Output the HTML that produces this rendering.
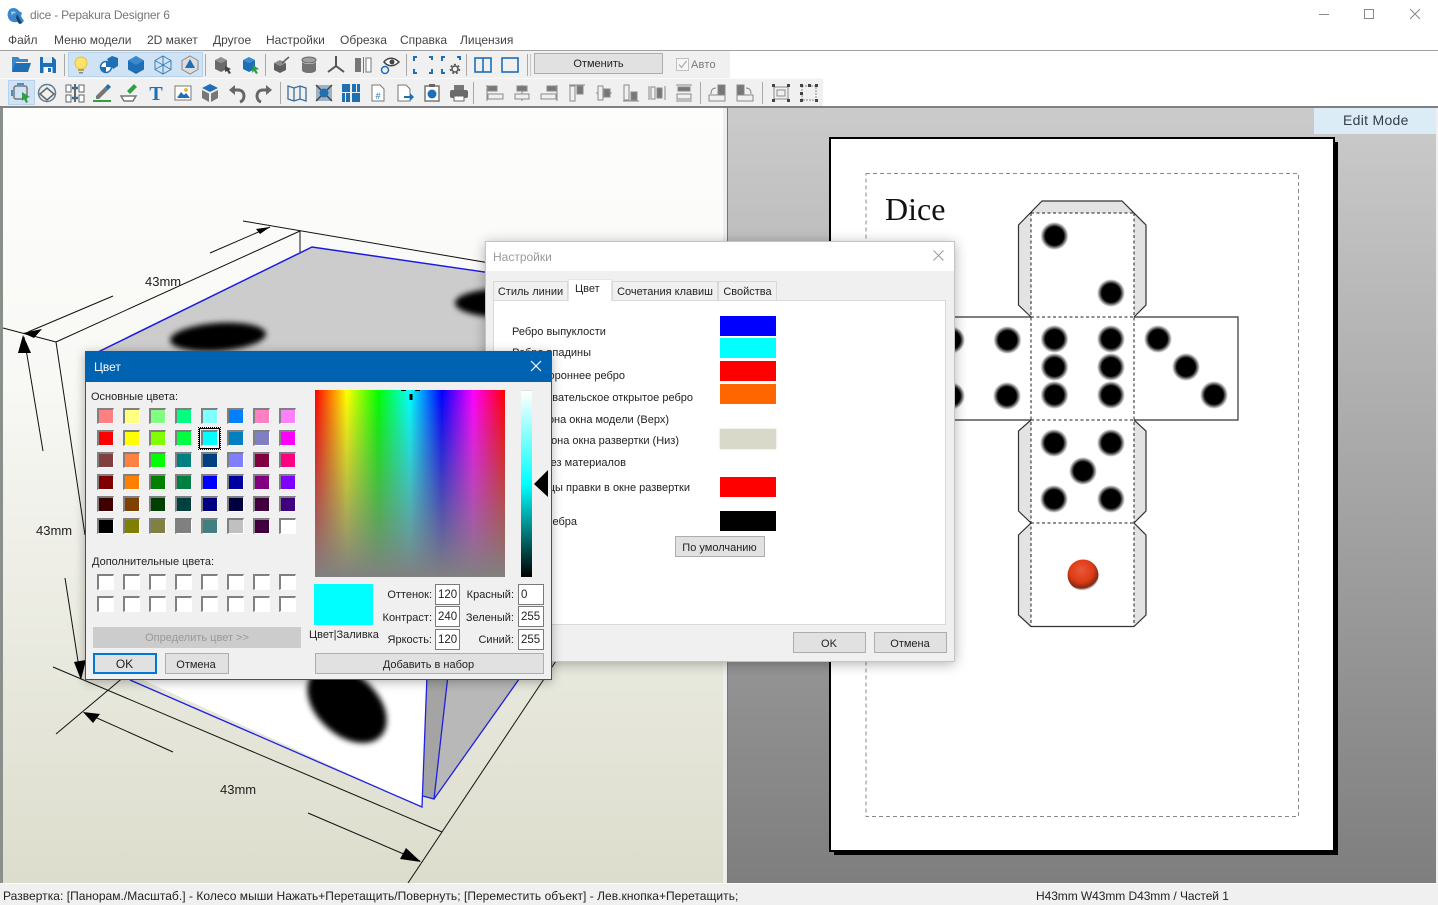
<!DOCTYPE html>
<html lang="ru"><head><meta charset="utf-8"><title>dice - Pepakura Designer 6</title>
<style>
html,body{margin:0;padding:0;background:#fff}
body{position:relative;width:1438px;height:905px;overflow:hidden;font-family:"Liberation Sans","Noto Sans CJK SC",sans-serif;font-size:11px;color:#222}
.a{position:absolute;white-space:nowrap}
.t{position:absolute;white-space:nowrap;line-height:14px}
.btn{position:absolute;box-sizing:border-box;background:#e1e1e1;border:1px solid #adadad;text-align:center;color:#222;white-space:nowrap}
.menu{position:absolute;top:33px;font-size:12px;line-height:14px;color:#444;white-space:nowrap}
.lab{position:absolute;white-space:nowrap;line-height:14px;color:#222}
.sw{position:absolute;left:720px;width:56px;height:20px}
.grid{position:absolute;display:grid;grid-template-columns:repeat(8,17px);column-gap:9px;row-gap:6px;grid-auto-rows:16px}
.grid i{display:block;box-sizing:border-box;border-style:solid;border-width:2px 1px 1px 2px;border-color:#808080 #fff #fff #808080}
.inp{position:absolute;box-sizing:border-box;background:#fff;border:1px solid #7a7a7a;height:21px;line-height:20px;padding-left:2px;font-size:11.5px;color:#222}
.rl{position:absolute;line-height:14px;white-space:nowrap;color:#222}
.tab{position:absolute;box-sizing:border-box;top:281px;height:19px;background:#f0f0f0;border:1px solid #d9d9d9;border-bottom:none;line-height:20px;text-align:center;color:#222;white-space:nowrap}
</style></head>
<body>

<!-- window chrome -->
<div class="a" style="left:0;top:0;width:1438px;height:51px;background:#fff;border-bottom:1px solid #a0a0a0;box-sizing:border-box"></div>
<svg class="a" style="left:7px;top:6px" width="20" height="20" viewBox="0 0 20 20"><path d="M3 3C6 1 10 2 12 5l3 2-1 3 3 5-3 3-4-2c-4 1-8-1-9-5C0 8 1 5 3 3z" fill="#3a88c9"/><path d="M10 8l5 9-3 1-3-6z" fill="#1c3f6b"/><path d="M4 6c2-1 4-1 5 1-2 0-4 1-4 3z" fill="#9dd0f2"/></svg>
<div class="t" style="left:30px;top:8px;font-size:12px;color:#777;letter-spacing:-.22px">dice - Pepakura Designer 6</div>
<svg class="a" style="left:1310px;top:0" width="128" height="30"><g stroke="#888" fill="none" stroke-width="1"><path d="M9 14.5h10"/><rect x="54.500" y="9.500" width="9" height="9"/><path d="M100 9l10 10M110 9l-10 10"/></g></svg>
<div class="menu" style="left:8px">Файл</div>
<div class="menu" style="left:54px">Меню модели</div>
<div class="menu" style="left:147px">2D макет</div>
<div class="menu" style="left:213px">Другое</div>
<div class="menu" style="left:266px">Настройки</div>
<div class="menu" style="left:340px">Обрезка</div>
<div class="menu" style="left:400px">Справка</div>
<div class="menu" style="left:460px">Лицензия</div>

<!-- toolbars -->
<div class="a" style="left:0;top:51px;width:730px;height:27px;background:#f0f0f0"></div>
<div class="a" style="left:0;top:78px;width:823px;height:29px;background:#f0f0f0;border-top:1px solid #fafafa;box-sizing:border-box"></div>
<div class="a" style="left:68px;top:52px;width:135px;height:25px;background:#cfe3f5;border:1px solid #b5d3ee;box-sizing:border-box"></div>
<div class="a" style="left:8px;top:80px;width:27px;height:25px;background:#cfe3f5;border:1px solid #b5d3ee;box-sizing:border-box"></div>
<div class="btn" style="left:534px;top:53px;width:129px;height:21px;line-height:21px">Отменить</div>
<div class="a" style="left:676px;top:58px;width:13px;height:13px;border:1px solid #c0c0c0;box-sizing:border-box;background:#f6f6f6"></div>
<svg class="a" style="left:676px;top:58px" width="13" height="13"><path d="M3 6.500l2.500 3L10.500 3" fill="none" stroke="#aaa" stroke-width="1.200"/></svg>
<div class="t" style="left:691px;top:58px;color:#777;letter-spacing:.2px">Авто</div>

<svg class="a" style="left:0;top:0" width="830" height="108">
<g stroke="#a8a8a8"><path d="M64.500 54v22M205.500 54v22M265.500 54v22M406.500 54v22M466.500 54v22M527.500 54v22M280.500 82v22M473.500 82v22M700.500 82v22M762.500 82v22" fill="none"/></g>
<g stroke="#c8c8c8"><path d="M530.500 54v22" fill="none"/></g>
<!-- row 1 -->
<g transform="translate(21,65)"><path d="M-9-8h6l2 2h8v3h-12l-4 10z" fill="#3b87c8"/><path d="M-6-2h16l-3 9H-9z" fill="#1f6fb5"/></g>
<g transform="translate(48,65)"><path d="M-8-8h13l3 3V8H-8z" fill="#1f6fb5"/><rect x="-5" y="-8" width="9" height="6" fill="#dcebf7"/><rect x="-4.500" y="2" width="9" height="6" fill="#fff"/><rect x="0" y="3" width="3" height="4" fill="#1f6fb5"/></g>
<g transform="translate(81,65)"><circle cy="-2" r="6" fill="#fde36b" stroke="#e6c33a"/><rect x="-3" y="4" width="6" height="2" fill="#b0a078"/><rect x="-2" y="7" width="4" height="1.500" fill="#888"/></g>
<g transform="translate(109,65)"><path d="M-2-6l5-3 6 2v8l-5 3z" fill="#1f6fb5"/><circle cx="-3" cy="2" r="5.500" fill="#fff" stroke="#1f6fb5" stroke-width="1.500"/><path d="M-3-3a5 5 0 0 1 5 5h-5zM-3 2v5a5 5 0 0 1-5-5z" fill="#1f6fb5"/></g>
<g transform="translate(136,65)"><path d="M0-9l8 4.500v9L0 9l-8-4.500v-9z" fill="#1f6fb5"/><path d="M0-9l8 4.500L0 0l-8-4.500z" fill="#3a8ad0"/></g>
<g transform="translate(163,65)" fill="none" stroke="#3b7fb8" stroke-width="1"><path d="M0-9l8 4.500v9L0 9l-8-4.500v-9zM0-9V9M-8-4.500L8 4.500M8-4.500L-8 4.500"/></g>
<g transform="translate(190,65)"><path d="M0-9l8 4.500v9L0 9l-8-4.500v-9z" fill="#ddd" stroke="#8a8a8a"/><path d="M0-6l5 9H-5z" fill="#1f6fb5"/></g>
<g transform="translate(222,65)"><path d="M-7-5l6-3 6 3-6 3z" fill="#909090"/><path d="M-7-5l6 3V7l-6-3zM5-5l-6 3V7l6-3z" fill="#6a6a6a"/><path d="M3 1l6 3-2 1 2 3-2 1-2-3-2 1z" fill="#444"/></g>
<g transform="translate(250,65)"><path d="M-7-5l6-3 6 3-6 3z" fill="#3a8ad0"/><path d="M-7-5l6 3V7l-6-3zM5-5l-6 3V7l6-3z" fill="#1f6fb5"/><path d="M3 0l6 4-3 1 2 3-2 1-2-3-2 2z" fill="#2ea043"/></g>
<g transform="translate(281,65)"><path d="M-7-2l6-3 6 3-6 3z" fill="#8a8a8a"/><path d="M-7-2l6 3v7l-6-3zM5-2l-6 3v7l6-3z" fill="#5e5e5e"/><path d="M1-2l7-6" stroke="#5e5e5e" stroke-width="1.500"/></g>
<g transform="translate(309,65)"><ellipse cy="-5" rx="7" ry="3" fill="#a0a0a0" stroke="#666"/><path d="M-7-4v9c0 4 14 4 14 0V-4c0 4-14 4-14 0z" fill="#737373"/></g>
<g transform="translate(336,65)" stroke="#555" stroke-width="2" fill="none"><path d="M0-9V1L-8 7M0 1L8 7"/></g>
<g transform="translate(363,65)"><rect x="-8" y="-7" width="6" height="14" fill="#777"/><rect x="3" y="-7" width="5" height="14" fill="#fff" stroke="#777"/><path d="M0.500-8V8" stroke="#777"/></g>
<g transform="translate(390,65)"><path d="M-6-3c4-5 10-5 15 0-5 5-11 5-15 0z" fill="#fff" stroke="#444" stroke-width="1.500"/><circle cx="2" cy="-3" r="2.500" fill="#444"/><circle cx="-5" cy="5" r="3.500" fill="none" stroke="#1f6fb5" stroke-width="1.500"/></g>
<g transform="translate(423,65)" fill="none" stroke="#1f6fb5" stroke-width="2"><path d="M-9-4v-4h3M6-8h3v3M-9 4v4h3M6 8h3V4"/></g>
<g transform="translate(451,65)"><path d="M-9-4v-4h3M6-8h3v3M-9 4v4h3" fill="none" stroke="#1f6fb5" stroke-width="2"/><circle cx="4" cy="4" r="3" fill="none" stroke="#555" stroke-width="1.500"/><circle cx="4" cy="4" r="4.500" fill="none" stroke="#555" stroke-width="1.500" stroke-dasharray="2 2"/></g>
<g fill="none" stroke="#1f6fb5" stroke-width="1.600"><rect x="475" y="58" width="16" height="14"/><path d="M483 58v14"/><rect x="502" y="58" width="16" height="14"/></g>
<!-- row 2 -->
<g transform="translate(21,93)"><rect x="-7" y="-7" width="13" height="13" rx="2" fill="none" stroke="#777" stroke-width="1.500"/><path d="M-4-9h7M-9-3v6" stroke="#1f6fb5" stroke-width="1.500"/><path d="M1-1l8 5-4 1 2 4-2 1-2-4-2 2z" fill="#2ea043"/></g>
<g transform="translate(47,93)" fill="none"><circle r="8.500" stroke="#5a7f9c" stroke-width="1.500"/><path d="M-7 1l7-6 7 6-7 6z" stroke="#666" stroke-width="1.500" fill="#f0f0f0"/></g>
<g transform="translate(75,93)"><rect x="-9" y="-8" width="5" height="7" fill="#fff" stroke="#666"/><rect x="4" y="-8" width="5" height="7" fill="#fff" stroke="#666"/><rect x="-9" y="2" width="5" height="7" fill="#fff" stroke="#666"/><rect x="4" y="2" width="5" height="7" fill="#fff" stroke="#666"/><path d="M-3-5h6M-3 5h6" stroke="#1f6fb5" stroke-width="2.500"/><rect x="-1" y="-9" width="2" height="18" fill="#666"/></g>
<g transform="translate(102,93)"><path d="M-6 3l9-9 3 3-9 9h-3z" fill="#777"/><path d="M3-6l3-3 3 3-3 3z" fill="#1f6fb5"/><rect x="-9" y="7" width="18" height="2" fill="#2ea043"/></g>
<g transform="translate(129,93)"><path d="M-2-2l7-7 3 3-7 7z" fill="#2ea043"/><path d="M-8 3h15l-3 5H-5z" fill="#fff" stroke="#777" stroke-width="1.500"/></g>
<text x="156" y="100" font-family="Liberation Serif,serif" font-size="20" font-weight="700" fill="#1f6fb5" text-anchor="middle">T</text>
<g transform="translate(183,93)"><rect x="-8" y="-7" width="16" height="14" fill="#fff" stroke="#777"/><circle cx="3" cy="-3" r="2" fill="#e8b93a"/><path d="M-6 5l4-6 3 3 2-2 4 5z" fill="#1f6fb5"/></g>
<g transform="translate(210,93)"><path d="M0-9l8 4-8 4-8-4z" fill="#1f6fb5"/><path d="M-8-3l7 3.500V9l-7-4zM8-3L1 .5V9l7-4z" fill="#777"/></g>
<g transform="translate(237,93)" fill="none" stroke="#666" stroke-width="3"><path d="M-6-3h7c5 0 6 4 6 6s-1 5-4 6"/><path d="M-8-3l6-5v10z" fill="#666" stroke="none"/></g>
<g transform="translate(264,93)" fill="none" stroke="#666" stroke-width="3"><path d="M6-3h-7c-5 0-6 4-6 6s1 5 4 6"/><path d="M8-3L2-8V2z" fill="#666" stroke="none"/></g>
<g transform="translate(297,93)" fill="none" stroke="#3b6d96" stroke-width="1.300"><path d="M-9-7l6 2 6-2 6 2V8L3 6-3 8-9 6zM-3-5V8M3-7V6"/></g>
<g transform="translate(324,93)"><rect x="-8" y="-8" width="16" height="16" fill="#9db2c3"/><path d="M-8-8l5 5M8-8L3-3M-8 8l5-5M8 8L3 3" stroke="#444" stroke-width="1.500"/><circle r="4.500" fill="#1f6fb5"/></g>
<g transform="translate(351,93)" fill="#1f6fb5"><rect x="-9" y="-9" width="8" height="8"/><rect x="1" y="-9" width="4" height="8"/><rect x="6" y="-9" width="3" height="8"/><rect x="-9" y="0" width="3" height="9"/><rect x="-5" y="0" width="4" height="9"/><rect x="1" y="0" width="8" height="9"/></g>
<g transform="translate(378,93)"><path d="M-6-8h8l4 4V8H-6z" fill="#fff" stroke="#777"/><text y="6" font-size="9" text-anchor="middle" fill="#1f6fb5" font-family="Liberation Sans,sans-serif">#</text></g>
<g transform="translate(405,93)"><path d="M-7-8h8l4 4V8H-7z" fill="#fff" stroke="#777"/><path d="M-1 3h6V0l4 4-4 4V5h-6z" fill="#1f6fb5"/></g>
<g transform="translate(432,93)"><rect x="-7" y="-7" width="14" height="15" fill="#fff" stroke="#777" stroke-width="1.500"/><rect x="-3" y="-9" width="6" height="3" fill="#666"/><circle cy="1" r="4.500" fill="#1f6fb5"/></g>
<g transform="translate(459,93)"><rect x="-5" y="-8" width="10" height="5" fill="#777"/><rect x="-9" y="-3" width="18" height="8" rx="2" fill="#6a6a6a"/><rect x="-5" y="3" width="10" height="5" fill="#fff" stroke="#666"/></g>
<!-- align icons -->
<g fill="none" stroke="#8a8a8a">
<g transform="translate(495,93)"><path d="M-8-8V8"/><rect x="-7" y="-7" width="9" height="5" fill="#777"/><rect x="-7" y="1" width="15" height="5" fill="#f0f0f0"/></g>
<g transform="translate(522,93)"><path d="M0-8V8"/><rect x="-5" y="-7" width="10" height="5" fill="#777"/><rect x="-7" y="1" width="14" height="5" fill="#f0f0f0"/></g>
<g transform="translate(549,93)"><path d="M8-8V8"/><rect x="-2" y="-7" width="9" height="5" fill="#777"/><rect x="-8" y="1" width="15" height="5" fill="#f0f0f0"/></g>
<g transform="translate(577,93)"><path d="M-8-8H8"/><rect x="-7" y="-7" width="5" height="15" fill="#f0f0f0"/><rect x="0" y="-7" width="6" height="8" fill="#777"/></g>
<g transform="translate(604,93)"><path d="M-8 0H8"/><rect x="-6" y="-7" width="5" height="14" fill="#f0f0f0"/><rect x="0" y="-4" width="6" height="8" fill="#777"/></g>
<g transform="translate(631,93)"><path d="M-8 8H8"/><rect x="-7" y="-8" width="5" height="15" fill="#f0f0f0"/><rect x="0" y="-1" width="6" height="8" fill="#777"/></g>
<g transform="translate(657,93)"><path d="M-8-7V7M8-7V7"/><rect x="-6" y="-6" width="4" height="12" fill="#f0f0f0"/><rect x="0" y="-5" width="5" height="10" fill="#777"/></g>
<g transform="translate(684,93)"><path d="M-8-8H8M-8 8H8"/><rect x="-6" y="-6" width="12" height="4" fill="#777"/><rect x="-7" y="1" width="14" height="5" fill="#f0f0f0"/></g>
<g transform="translate(717,93)"><rect x="1" y="-8" width="7" height="16" fill="#777"/><rect x="-8" y="2" width="16" height="6" fill="#f0f0f0"/><path d="M-1-5c-4 0-5 3-5 6"/></g>
<g transform="translate(745,93)"><rect x="-8" y="-8" width="7" height="16" fill="#777"/><rect x="-8" y="2" width="16" height="6" fill="#f0f0f0"/><path d="M1-5c4 0 5 3 5 6"/></g>
<g transform="translate(781,93)"><path d="M-7-6H7V6H-7zM-4-3H4V3H-4z"/><g fill="#444" stroke="none"><rect x="-9" y="-9" width="3" height="3"/><rect x="6" y="-9" width="3" height="3"/><rect x="-9" y="6" width="3" height="3"/><rect x="6" y="6" width="3" height="3"/></g></g>
<g transform="translate(809,93)"><path d="M-7-7H7V7H-7z" stroke-dasharray="2 1"/><g fill="#444" stroke="none"><rect x="-9" y="-9" width="3" height="3"/><rect x="6" y="-9" width="3" height="3"/><rect x="-9" y="6" width="3" height="3"/><rect x="6" y="6" width="3" height="3"/><rect x="-1" y="-9" width="3" height="3"/><rect x="-9" y="-1" width="3" height="3"/></g></g>
</g>
</svg>

<!-- main views -->
<div class="a" style="left:0;top:106px;width:1438px;height:2px;background:#808080"></div>
<div class="a" style="left:0;top:108px;width:3px;height:775px;background:#8b8f8c"></div>
<div class="a" style="left:3px;top:108px;width:720px;height:775px;background:linear-gradient(#fdfdfc,#f8f8f5 35%,#dcddcc)"></div>
<div class="a" style="left:723px;top:108px;width:4px;height:775px;background:#eeeeee"></div>
<div class="a" style="left:727px;top:108px;width:709px;height:775px;background:linear-gradient(#cbcbcb,#7e7e7e);border-left:1px solid #777;box-sizing:border-box"></div>
<div class="a" style="left:1436px;top:108px;width:2px;height:775px;background:#f0f0f0"></div>

<!-- 3D scene -->
<svg class="a" style="left:0;top:0" width="727" height="883" viewBox="0 0 727 883">
<defs><filter id="b3" x="-30%" y="-30%" width="160%" height="160%"><feGaussianBlur stdDeviation="3"/></filter></defs>
<polygon points="98,352 312,247 727,310 727,400 98,400" fill="#cccccc"/>
<ellipse cx="218" cy="337" rx="48" ry="14" transform="rotate(-4 218 337)" fill="#000" filter="url(#b3)"/>
<ellipse cx="500" cy="303" rx="45" ry="14" fill="#000" filter="url(#b3)"/>
<polyline points="98,352 312,247 560,283" fill="none" stroke="#1a1ae0" stroke-width="1.500"/>
<polygon points="132,675 422,807 427,675" fill="#fff"/>
<ellipse cx="347" cy="705" rx="46" ry="30" transform="rotate(42 347 705)" fill="#000" filter="url(#b3)"/>
<polygon points="427,675 448,675 434,799 423,796" fill="#a4a4a4"/>
<polygon points="448,675 522,675 434,799" fill="#b8b8b8"/>
<g fill="none" stroke="#2020e0" stroke-width="1.300"><polyline points="130,680 422,807 427,675"/><polyline points="423,796 434,799 448,675"/><path d="M434,799L522,675"/></g>
<g fill="none" stroke="#111" stroke-width="1">
<path d="M243,221L560,275M56,342L300,231M300,231V252M210,253L270,227M113,296L28,332M3,328L56,342M56,342L85,535M43,451L24,337M65,578L80,674M53,667L442,832M56,734L125,676M173,752L88,714M408,883L560,655M308,813L420,861"/>
</g>
<g fill="#000">
<polygon points="270,227 256,229 260,234"/>
<polygon points="23,333 42,329 34,338"/>
<polygon points="23,335 18,353 31,353"/>
<polygon points="81,680 74,662 86,660"/>
<polygon points="83,712 100,714 93,723"/>
<polygon points="421,862 400,859 406,848"/>
</g>
<text x="145" y="286" font-family="Liberation Sans,sans-serif" font-size="13" fill="#222">43mm</text>
<text x="36" y="535" font-family="Liberation Sans,sans-serif" font-size="13" fill="#222">43mm</text>
<text x="220" y="794" font-family="Liberation Sans,sans-serif" font-size="13" fill="#222">43mm</text>
</svg>

<!-- Edit Mode & paper -->
<div class="a" style="left:1314px;top:108px;width:122px;height:26px;background:#dcecf6"></div>
<div class="t" style="left:1343px;top:113px;font-size:14px;color:#333d48;letter-spacing:.3px">Edit Mode</div>
<div class="a" style="left:834px;top:142px;width:504px;height:713px;background:#000"></div>
<div class="a" style="left:829px;top:137px;width:506px;height:715px;background:#fff;border:2px solid #000;box-sizing:border-box"></div>

<svg class="a" style="left:0;top:0;pointer-events:none" width="1438" height="905">
<defs>
<radialGradient id="dot"><stop offset="0" stop-color="#000"/><stop offset=".66" stop-color="#000"/><stop offset="1" stop-color="#000" stop-opacity="0"/></radialGradient>
<radialGradient id="red" cx=".45" cy=".35" r=".65"><stop offset="0" stop-color="#e8583a"/><stop offset=".6" stop-color="#dd3a14"/><stop offset=".88" stop-color="#7c2a18"/><stop offset="1" stop-color="#9c8f88" stop-opacity=".2"/></radialGradient>
</defs>
<rect x="866" y="173.500" width="432.500" height="643" fill="none" stroke="#8a8a8a" stroke-dasharray="4 3"/>
<text x="885" y="220" font-family="Liberation Serif,serif" font-size="32" fill="#111">Dice</text>
<g fill="#e3e3e3">
<polygon points="1018.500,225 1042,201 1122,201 1146,225 1146,305 1134,317 1134,213 1031,213 1031,317 1018.500,305"/>
<polygon points="1031,420 1018.500,431 1018.500,511 1031,523 1018.500,535 1018.500,615 1031,626.500"/>
<polygon points="1134,420 1146,431 1146,511 1134,523 1146,535 1146,615 1134,626.500"/>
</g>
<g fill="none" stroke="#333" stroke-width="1.200">
<polyline points="1031,317 1018.500,305 1018.500,225 1042,201 1122,201 1146,225 1146,305 1134,317"/>
<polyline points="1031,317 940,317"/><polyline points="940,420 1031,420"/>
<polyline points="1134,317 1238,317 1238,420 1134,420"/>
<polyline points="1031,420 1018.500,431 1018.500,511 1031,523 1018.500,535 1018.500,615 1031,626.500 1134,626.500 1146,615 1146,535 1134,523 1146,511 1146,431 1134,420"/>
</g>
<g fill="none" stroke="#222" stroke-dasharray="3 2.500">
<path d="M1031,213H1134M1031,213V626M1134,213V626M1031,317H1134M1031,420H1134M1031,523H1134"/>
</g>
<g fill="url(#dot)">
<circle cx="1054.500" cy="236" r="14"/><circle cx="1111" cy="293" r="14"/>
<circle cx="951" cy="340" r="14"/><circle cx="951" cy="396" r="14"/><circle cx="1007.500" cy="340" r="14"/><circle cx="1007" cy="396" r="14"/>
<circle cx="1054.500" cy="339" r="14"/><circle cx="1111" cy="339" r="14"/><circle cx="1054.500" cy="367" r="14"/><circle cx="1111" cy="367" r="14"/><circle cx="1054.500" cy="395" r="14"/><circle cx="1111" cy="395" r="14"/>
<circle cx="1158" cy="339" r="14"/><circle cx="1186" cy="367" r="14"/><circle cx="1214" cy="395" r="14"/>
<circle cx="1054" cy="443" r="14"/><circle cx="1111" cy="443" r="14"/><circle cx="1083" cy="471" r="14"/><circle cx="1054" cy="499" r="14"/><circle cx="1111" cy="499" r="14"/>
</g>
<circle cx="1083" cy="575" r="15.500" fill="url(#red)"/>
</svg>

<!-- status bar -->
<div class="a" style="left:0;top:883px;width:1438px;height:22px;background:#f0f0f0;border-top:1px solid #fbfbfb;box-sizing:border-box"></div>
<div class="t" style="left:3px;top:889px;font-size:12px;color:#222;letter-spacing:.035px">Развертка: [Панорам./Масштаб.] - Колесо мыши Нажать+Перетащить/Повернуть; [Переместить объект] - Лев.кнопка+Перетащить;</div>
<div class="t" style="left:1036px;top:889px;font-size:12px;color:#222;letter-spacing:-.07px">H43mm W43mm D43mm / Частей 1</div>

<!-- Settings dialog -->
<div class="a" style="left:485px;top:241px;width:470px;height:421px;background:#f0f0f0;border:1px solid #c4c4c4;box-sizing:border-box;box-shadow:0 2px 12px rgba(0,0,0,.3)"></div>
<div class="a" style="left:486px;top:242px;width:468px;height:29px;background:#fff"></div>
<div class="t" style="left:493px;top:250px;font-size:12px;color:#999">Настройки</div>
<svg class="a" style="left:932px;top:249px" width="14" height="14"><path d="M1.500 1.500l10 10M11.500 1.500l-10 10" stroke="#999" fill="none"/></svg>
<div class="a" style="left:493px;top:300px;width:453px;height:325px;background:#fff;border:1px solid #d9d9d9;box-sizing:border-box"></div>
<div class="tab" style="left:493px;width:75px">Стиль линии</div>
<div class="tab" style="left:568px;width:44px;top:279px;height:22px;background:#fff;border-color:#e4e4e4;line-height:19px;text-align:left;padding-left:6px">Цвет</div>
<div class="tab" style="left:612px;width:106px">Сочетания клавиш</div>
<div class="tab" style="left:718px;width:59px">Свойства</div>
<div class="lab" style="left:512px;top:325px">Ребро выпуклости</div>
<div class="lab" style="right:847px;top:346px">Ребро впадины</div>
<div class="lab" style="right:813px;top:369px">Постороннее ребро</div>
<div class="lab" style="right:745px;top:391px">Пользовательское открытое ребро</div>
<div class="lab" style="right:769px;top:413px">Цвет фона окна модели (Верх)</div>
<div class="lab" style="right:759px;top:434px">Цвет фона окна развертки (Низ)</div>
<div class="lab" style="right:812px;top:456px">Цвет без материалов</div>
<div class="lab" style="right:748px;top:481px">Границы правки в окне развертки</div>
<div class="lab" style="right:861px;top:515px">Другие ребра</div>
<div class="sw" style="top:316px;background:#0000ff"></div>
<div class="sw" style="top:338px;background:#00ffff"></div>
<div class="sw" style="top:361px;background:#ff0000"></div>
<div class="sw" style="top:384px;background:#ff6600"></div>
<div class="sw" style="top:429px;background:#d8d9c8;box-shadow:0 0 2px #d8d9c8"></div>
<div class="sw" style="top:477px;background:#ff0000"></div>
<div class="sw" style="top:511px;background:#000"></div>
<div class="btn" style="left:675px;top:536px;width:90px;height:21px;line-height:22px;padding-right:1px">По умолчанию</div>
<div class="btn" style="left:793px;top:632px;width:73px;height:21px;line-height:22px;padding-right:1px">OK</div>
<div class="btn" style="left:874px;top:632px;width:73px;height:21px;line-height:22px;padding-right:1px">Отмена</div>

<!-- Color dialog -->
<div class="a" style="left:85px;top:351px;width:467px;height:329px;background:#f0f0f0;border:1px solid #0063b1;box-sizing:border-box;box-shadow:0 2px 10px rgba(0,0,0,.3)"></div>
<div class="a" style="left:85px;top:351px;width:467px;height:31px;background:#0063b1"></div>
<div class="t" style="left:94px;top:360px;font-size:12px;color:#fff">Цвет</div>
<svg class="a" style="left:530px;top:360px" width="12" height="12"><path d="M1 1l10 10M11 1L1 11" stroke="#fff" fill="none" stroke-width="1.200"/></svg>
<div class="t" style="left:91px;top:390px">Основные цвета:</div>
<div class="grid" style="left:97px;top:408px">
<i style="background:#ff8080"></i><i style="background:#ffff80"></i><i style="background:#80ff80"></i><i style="background:#00ff80"></i><i style="background:#80ffff"></i><i style="background:#0080ff"></i><i style="background:#ff80c0"></i><i style="background:#ff80ff"></i>
<i style="background:#ff0000"></i><i style="background:#ffff00"></i><i style="background:#80ff00"></i><i style="background:#00ff40"></i><i style="background:#00ffff"></i><i style="background:#0080c0"></i><i style="background:#8080c0"></i><i style="background:#ff00ff"></i>
<i style="background:#804040"></i><i style="background:#ff8040"></i><i style="background:#00ff00"></i><i style="background:#008080"></i><i style="background:#004080"></i><i style="background:#8080ff"></i><i style="background:#800040"></i><i style="background:#ff0080"></i>
<i style="background:#800000"></i><i style="background:#ff8000"></i><i style="background:#008000"></i><i style="background:#008040"></i><i style="background:#0000ff"></i><i style="background:#0000a0"></i><i style="background:#800080"></i><i style="background:#8000ff"></i>
<i style="background:#400000"></i><i style="background:#804000"></i><i style="background:#004000"></i><i style="background:#004040"></i><i style="background:#000080"></i><i style="background:#000040"></i><i style="background:#400040"></i><i style="background:#400080"></i>
<i style="background:#000000"></i><i style="background:#808000"></i><i style="background:#808040"></i><i style="background:#808080"></i><i style="background:#408080"></i><i style="background:#c0c0c0"></i><i style="background:#400040"></i><i style="background:#ffffff"></i>
</div>
<div class="a" style="left:198px;top:427px;width:23px;height:23px;box-sizing:border-box;border:1px dotted #000"></div>
<div class="a" style="left:199px;top:428px;width:21px;height:21px;box-sizing:border-box;border:1px solid #000"></div>
<div class="t" style="left:92px;top:555px">Дополнительные цвета:</div>
<div class="grid" style="left:97px;top:574px">
<i style="background:#fff"></i><i style="background:#fff"></i><i style="background:#fff"></i><i style="background:#fff"></i><i style="background:#fff"></i><i style="background:#fff"></i><i style="background:#fff"></i><i style="background:#fff"></i>
<i style="background:#fff"></i><i style="background:#fff"></i><i style="background:#fff"></i><i style="background:#fff"></i><i style="background:#fff"></i><i style="background:#fff"></i><i style="background:#fff"></i><i style="background:#fff"></i>
</div>
<div class="btn" style="left:93px;top:627px;width:208px;height:21px;line-height:23px;background:#cccccc;border:none;color:#999">Определить цвет &gt;&gt;</div>
<div class="btn" style="left:93px;top:653px;width:64px;height:21px;line-height:19px;border:2px solid #0078d7;font-size:12px;padding-right:1px">OK</div>
<div class="btn" style="left:165px;top:653px;width:64px;height:21px;line-height:22px;padding-right:2px">Отмена</div>

<div class="a" style="left:314.500px;top:389.500px;width:190.500px;height:187.500px;background:linear-gradient(#80808000,#808080),linear-gradient(90deg,#f00,#ff0 16.67%,#0f0 33.33%,#0ff 50%,#00f 66.67%,#f0f 83.33%,#f00)"></div>
<svg class="a" style="left:400px;top:388px" width="22" height="14"><path d="M1 2.500h5M15 2.500h5" stroke="#000"/><rect x="9.500" y="6" width="3" height="6" fill="#000"/></svg>
<div class="a" style="left:521px;top:390px;width:11px;height:187px;background:linear-gradient(#fff,#0ff 50%,#000);border-top:1px solid #ddd;box-sizing:border-box"></div>
<svg class="a" style="left:534px;top:470px" width="15" height="28"><polygon points="0,14 14,0 14,27" fill="#000"/></svg>
<div class="a" style="left:314px;top:584px;width:59px;height:41px;background:#00ffff"></div>
<div class="t" style="left:309px;top:628px">Цвет|Заливка</div>
<div class="rl" style="right:1006px;top:588px">Оттенок:</div>
<div class="rl" style="right:1006px;top:611px">Контраст:</div>
<div class="rl" style="right:1006px;top:633px">Яркость:</div>
<div class="rl" style="right:924px;top:588px">Красный:</div>
<div class="rl" style="right:924px;top:611px">Зеленый:</div>
<div class="rl" style="right:924px;top:633px">Синий:</div>
<div class="inp" style="left:435px;top:584px;width:25px">120</div>
<div class="inp" style="left:435px;top:606px;width:25px">240</div>
<div class="inp" style="left:435px;top:629px;width:25px">120</div>
<div class="inp" style="left:518px;top:584px;width:26px">0</div>
<div class="inp" style="left:518px;top:606px;width:26px">255</div>
<div class="inp" style="left:518px;top:629px;width:26px">255</div>
<div class="btn" style="left:315px;top:653px;width:229px;height:21px;line-height:22px;padding-right:2px">Добавить в набор</div>

</body></html>
